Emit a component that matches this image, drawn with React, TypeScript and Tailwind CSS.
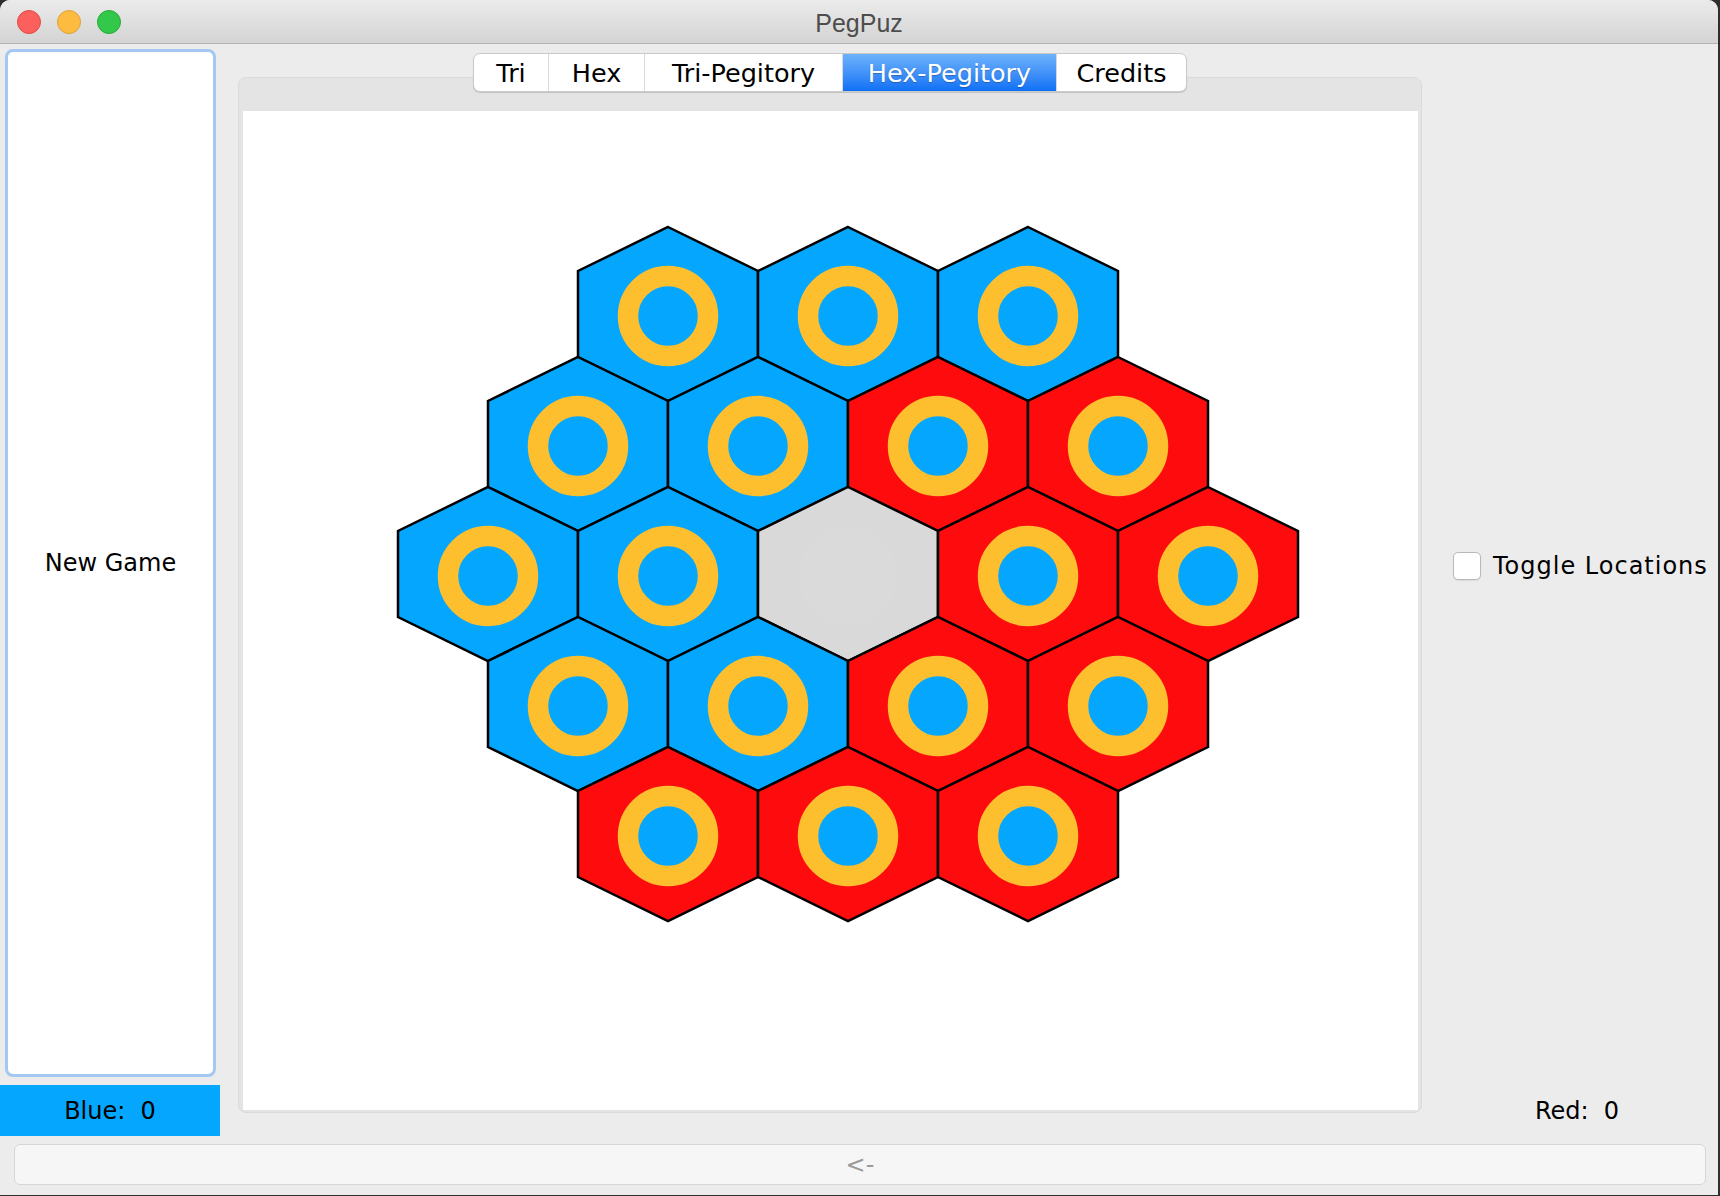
import React from 'react';

const BLUE = '#05a6fd';
const RED = '#fe0b0e';
const GOLD = '#fdbf2e';
const EMPTY = '#d9d9d9';

// board rows: centre y, centre xs, colour per cell (B blue, R red, G empty)
const rows = [
  { y: 314, xs: [668, 848, 1028], c: 'BBB' },
  { y: 444, xs: [578, 758, 938, 1118], c: 'BBRR' },
  { y: 574, xs: [488, 668, 848, 1028, 1208], c: 'BBGRR' },
  { y: 704, xs: [578, 758, 938, 1118], c: 'BBRR' },
  { y: 834, xs: [668, 848, 1028], c: 'RRR' },
];

const hexPoints = (cx: number, cy: number) =>
  [
    [cx, cy - 87],
    [cx + 90, cy - 43],
    [cx + 90, cy + 43],
    [cx, cy + 87],
    [cx - 90, cy + 43],
    [cx - 90, cy - 43],
  ]
    .map((p) => p.join(','))
    .join(' ');

function Board() {
  const cells = rows.flatMap((r) =>
    r.xs.map((x, i) => ({ x, y: r.y, k: r.c[i] }))
  );
  return (
    <svg width="1175" height="999" viewBox="243 111 1175 999" className="block">
      {cells.map((c, i) => (
        <polygon
          key={'h' + i}
          points={hexPoints(c.x, c.y)}
          fill={c.k === 'B' ? BLUE : c.k === 'R' ? RED : EMPTY}
          stroke="#000"
          strokeWidth="2.5"
          strokeLinejoin="miter"
        />
      ))}
      {cells
        .filter((c) => c.k !== 'G')
        .map((c, i) => (
          <circle
            key={'p' + i}
            cx={c.x}
            cy={c.y + 2}
            r="40"
            fill={BLUE}
            stroke={GOLD}
            strokeWidth="20.5"
          />
        ))}
      {/* faint peg hole in the empty cell */}
      <circle cx={848} cy={576} r="50" fill="#dadada" />
    </svg>
  );
}

const tabs = [
  { label: 'Tri', w: 'w-[74px]' },
  { label: 'Hex', w: 'w-[96px]' },
  { label: 'Tri-Pegitory', w: 'w-[198px]' },
  { label: 'Hex-Pegitory', w: 'w-[214px]', active: true },
  { label: 'Credits', w: 'w-[130px]' },
];

export default function App() {
  return (
    <div className="w-[1720px] h-[1196px] bg-[#2e2e2e] overflow-hidden font-['DejaVu_Sans',sans-serif]">
      <div className="w-[1718px] h-[1195px] rounded-t-[10px] overflow-hidden flex flex-col bg-[#ececec]">
        {/* Title bar */}
        <div className="h-[44px] grid grid-cols-[1fr_auto_1fr] items-center bg-gradient-to-b from-[#ebebeb] to-[#d4d4d4] border-b border-[#b4b4b4]">
          <div className="flex items-center gap-[16px] pl-[17px] pt-[1px]">
            <span className="w-[24px] h-[24px] rounded-full bg-[#fc605c] border border-[#de4a45]" />
            <span className="w-[24px] h-[24px] rounded-full bg-[#fdbc40] border border-[#dea236]" />
            <span className="w-[24px] h-[24px] rounded-full bg-[#34c84a] border border-[#27aa35]" />
          </div>
          <div className="font-['Liberation_Sans',sans-serif] text-[25px] text-[#4d4d4d] leading-none pt-[3px]">
            PegPuz
          </div>
          <div />
        </div>

        {/* Main row */}
        <div className="flex h-[1100px]">
          {/* Left column */}
          <div className="w-[220px] flex flex-col">
            <div className="flex-1 pt-[5px] pb-[8px] pl-[5px] pr-[4px] flex">
              <button className="flex-1 bg-white rounded-[8px] border-[3px] border-[#a3c8f2] text-[24px] text-black flex items-center justify-center">
                New Game
              </button>
            </div>
            <div className="h-[51px] mb-[8px] bg-[#05a6fd] flex items-center justify-center text-[24px] text-black whitespace-pre">
              Blue:  0
            </div>
          </div>

          {/* Tabbed board */}
          <div className="ml-[18px] w-[1184px] flex flex-col">
            <div className="pt-[9px] flex justify-center relative z-10">
              <div className="flex h-[39px] rounded-[7px] bg-white border border-[#c9c9c9] shadow-[0_1px_1px_rgba(0,0,0,0.15)] overflow-hidden">
                {tabs.map((t, i) => (
                  <div
                    key={t.label}
                    className={
                      t.w +
                      ' flex items-center justify-center text-[25.5px] pt-[2px] ' +
                      (i > 0 ? 'border-l border-[#d9d9d9] ' : '') +
                      (t.active
                        ? 'bg-gradient-to-b from-[#6db2fb] to-[#0a70f5] text-white [text-shadow:0_1px_1px_rgba(0,0,0,0.25)]'
                        : 'text-black')
                    }
                  >
                    {t.label}
                  </div>
                ))}
              </div>
            </div>
            <div className="-mt-[15px] h-[1036px] rounded-[8px] bg-[#e4e4e4] border border-[#dadada] pt-[33px] pl-[4px] pr-[3px] pb-[2px] flex">
              <div className="flex-1 bg-white overflow-hidden">
                <Board />
              </div>
            </div>
          </div>

          {/* Right column */}
          <div className="flex-1 flex flex-col">
            <div className="flex-1 flex items-center pl-[31px] pt-[2px]">
              <span className="w-[28px] h-[28px] rounded-[5px] bg-white border border-[#b9b9b9] shadow-[0_1px_1px_rgba(0,0,0,0.08)]" />
              <span className="ml-[12px] text-[24px] text-black tracking-[1px]">Toggle Locations</span>
            </div>
            <div className="h-[51px] mb-[8px] pl-[14px] flex items-center justify-center text-[24px] text-black whitespace-pre">
              Red:  0
            </div>
          </div>
        </div>

        {/* Bottom bar */}
        <div className="pl-[14px] pr-[12px]">
          <div className="h-[41px] rounded-[6px] bg-[#f6f6f6] border border-[#d6d6d6] flex items-center justify-center text-[24px] text-[#9a9a9a]">
            &lt;-
          </div>
        </div>
      </div>
    </div>
  );
}
